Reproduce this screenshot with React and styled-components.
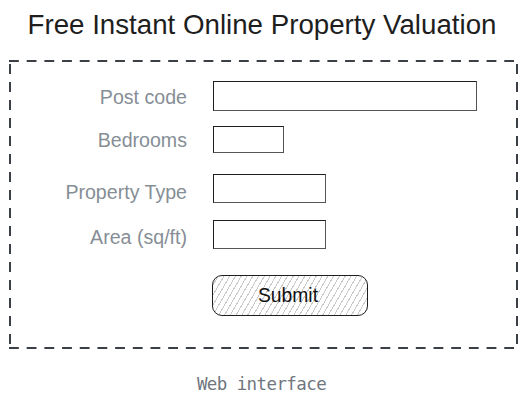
import styled, { createGlobalStyle } from "styled-components";

const Global = createGlobalStyle`
  body {
    margin: 0;
    background: #fff;
    font-family: "Liberation Sans", Arial, sans-serif;
  }
`

const Page = styled.div`
  width: 528px;
  height: 407px;
  display: flex;
  flex-direction: column;
  align-items: flex-start;
`

const Title = styled.h1`
  align-self: stretch;
  margin: 0;
  padding: 9px 4px 0 0;
  height: 51px;
  box-sizing: border-box;
  text-align: center;
  font-size: 27.7px;
  line-height: 32px;
  font-weight: 400;
  color: #1e1e1e;
`

const dash = "#3b3f46";

const Frame = styled.div`
  margin-top: 9px;
  margin-left: 9px;
  width: 509px;
  height: 289px;
  box-sizing: border-box;
  padding: 21px 0 0 2px;
  background:
    linear-gradient(to right, ${dash} 10px, transparent 10px) 0 0 / 17.7px 2px repeat-x,
    linear-gradient(to right, ${dash} 10px, transparent 10px) 0 100% / 17.7px 2px repeat-x,
    linear-gradient(to bottom, ${dash} 10px, transparent 10px) 0 4px / 2px 18px repeat-y,
    linear-gradient(to bottom, ${dash} 10px, transparent 10px) 100% 4px / 2px 18px repeat-y;
  display: flex;
  flex-direction: column;
`

const Row = styled.div`
  display: grid;
  grid-template-columns: 176px auto;
  column-gap: 26px;
  align-items: center;
  margin-top: ${p => p.$gap || 0}px;
`

const Label = styled.label`
  text-align: right;
  font-size: 19.6px;
  line-height: 22px;
  color: #868e96;
  position: relative;
  top: ${p => p.$shift || 0}px;
`

const Field = styled.div`
  width: ${p => p.$w}px;
  height: ${p => p.$h}px;
  box-sizing: border-box;
  border: 1.3px solid #1e1e1e;
  border-right-color: #555;
  border-bottom-color: #555;
  background: #fff;
`

const Submit = styled.button`
  margin-left: 201px;
  margin-top: 26px;
  width: 156px;
  height: 41px;
  border: 1.5px solid #1e1e1e;
  border-radius: 10px;
  background: repeating-linear-gradient(120deg, #fff 0 4px, #c9c9c9 4px 5px);
  font-family: "Liberation Sans", Arial, sans-serif;
  font-size: 19.3px;
  color: #111;
  padding: 0 4px 0 0;
`

const Caption = styled.div`
  align-self: center;
  margin-top: 25px;
  margin-right: 5px;
  font-family: "DejaVu Sans Mono", monospace;
  font-size: 17.5px;
  letter-spacing: -0.6px;
  color: #70767e;
`

const rows = [
  { label: "Post code", w: 264, h: 30, gap: 0, shift: 1 },
  { label: "Bedrooms", w: 71, h: 27, gap: 15, shift: 0 },
  { label: "Property Type", w: 113, h: 29, gap: 21, shift: 3 },
  { label: "Area (sq/ft)", w: 113, h: 29, gap: 17, shift: 2 },
];

export default function App() {
  return (
    <Page>
      <Global />
      <Title>Free Instant Online Property Valuation</Title>
      <Frame>
        {rows.map(r => (
          <Row key={r.label} $gap={r.gap}>
            <Label $shift={r.shift}>{r.label}</Label>
            <Field $w={r.w} $h={r.h} />
          </Row>
        ))}
        <Submit>Submit</Submit>
      </Frame>
      <Caption>Web interface</Caption>
    </Page>
  );
}
